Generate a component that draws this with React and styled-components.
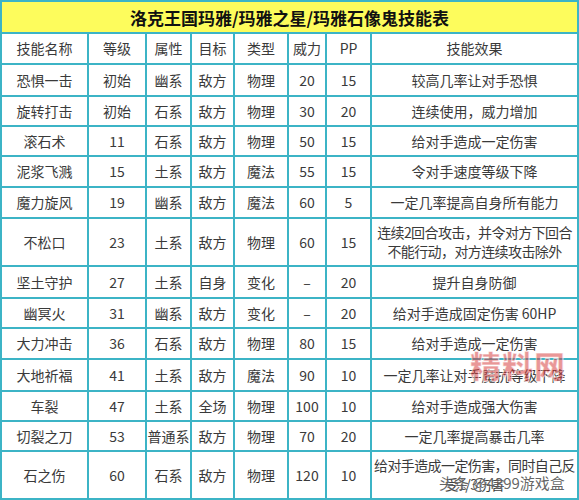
import React from "react";
import styled, { createGlobalStyle } from "styled-components";

const GlobalStyle = createGlobalStyle`
  html, body {
    margin: 0;
    padding: 0;
    background: #ffffff;
  }
  body {
    font-family: "Noto Sans CJK SC", "DejaVu Sans", sans-serif;
  }
`;

const columns = [87, 58, 45, 43, 54, 38, 45, 207];

const header = ["技能名称", "等级", "属性", "目标", "类型", "威力", "PP", "技能效果"];

const skills = [
  { h: 32, cells: ["恐惧一击", "初始", "幽系", "敌方", "物理", "20", "15", "较高几率让对手恐惧"] },
  { h: 30, cells: ["旋转打击", "初始", "石系", "敌方", "物理", "30", "20", "连续使用，威力增加"] },
  { h: 30, cells: ["滚石术", "11", "石系", "敌方", "物理", "50", "15", "给对手造成一定伤害"] },
  { h: 31, cells: ["泥浆飞溅", "15", "土系", "敌方", "魔法", "55", "15", "令对手速度等级下降"] },
  { h: 31, cells: ["魔力旋风", "19", "幽系", "敌方", "魔法", "60", "5", "一定几率提高自身所有能力"] },
  {
    h: 48,
    cells: ["不松口", "23", "土系", "敌方", "物理", "60", "15", ["连续2回合攻击，并令对方下回合", "不能行动，对方连续攻击除外"]],
  },
  { h: 32, cells: ["坚土守护", "27", "土系", "自身", "变化", "–", "20", "提升自身防御"] },
  { h: 30, cells: ["幽冥火", "31", "幽系", "敌方", "变化", "–", "20", "给对手造成固定伤害 60HP"] },
  { h: 31, cells: ["大力冲击", "36", "石系", "敌方", "物理", "80", "15", "给对手造成一定伤害"] },
  { h: 32, cells: ["大地祈福", "41", "土系", "敌方", "魔法", "90", "10", "一定几率让对手魔抗等级下降"] },
  { h: 30, cells: ["车裂", "47", "土系", "全场", "物理", "100", "10", "给对手造成强大伤害"] },
  { h: 30, cells: ["切裂之刀", "53", "普通系", "敌方", "物理", "70", "20", "一定几率提高暴击几率"] },
  {
    h: 48,
    cells: ["石之伤", "60", "石系", "敌方", "物理", "120", "10", ["给对手造成一定伤害，同时自己反", "受1/3伤害"]],
  },
];

export default function App() {
  return (
    <Page>
      <GlobalStyle />
      <Table>
        <colgroup>
          {columns.map((w, i) => (
            <col key={i} style={{ width: w }} />
          ))}
        </colgroup>
        <tbody>
          <Row $h={32}>
            <TitleCell colSpan={8}>洛克王国玛雅/玛雅之星/玛雅石像鬼技能表</TitleCell>
          </Row>
          <Row $h={31}>
            {header.map((t) => (
              <Cell key={t}>{t}</Cell>
            ))}
          </Row>
          {skills.map((s) => (
            <Row key={s.cells[0]} $h={s.h}>
              {s.cells.map((c, i) =>
                Array.isArray(c) ? (
                  <Cell key={i} $tight={c[0].length > 14}>
                    {c[0]}
                    <br />
                    {c[1]}
                  </Cell>
                ) : (
                  <Cell key={i}>{c}</Cell>
                )
              )}
            </Row>
          ))}
        </tbody>
      </Table>
      <RedMark>精料网</RedMark>
      <SourceMark>头条 @4399游戏盒</SourceMark>
    </Page>
  );
}

const Page = styled.div`
  position: relative;
  width: 579px;
  height: 500px;
  overflow: hidden;
  background: #ffffff;
`;

const Table = styled.table`
  table-layout: fixed;
  width: 577px;
  border-collapse: collapse;
  border: 2px solid #3cb4c6;
`;

const Row = styled.tr`
  height: ${(p) => p.$h}px;
`;

const Cell = styled.td`
  border: 2px solid #3cb4c6;
  padding: 0;
  text-align: center;
  vertical-align: middle;
  font-size: 14px;
  line-height: 19px;
  color: #3a3a3a;
  white-space: nowrap;
  overflow: visible;
  letter-spacing: ${(p) => (p.$tight ? "-0.6px" : "0")};
`;

const TitleCell = styled.td`
  border: 2px solid #3cb4c6;
  background: #fdfc5c;
  text-align: center;
  vertical-align: middle;
  font-size: 17px;
  font-weight: 700;
  color: #111111;
  padding: 0;
`;

const RedMark = styled.div`
  position: absolute;
  left: 470px;
  top: 342px;
  font-size: 31px;
  font-weight: 900;
  letter-spacing: 1px;
  color: rgba(214, 60, 60, 0.55);
  -webkit-text-stroke: 1px rgba(255, 255, 255, 0.6);
  pointer-events: none;
`;

const SourceMark = styled.div`
  position: absolute;
  left: 439px;
  top: 472px;
  font-size: 15px;
  color: rgba(60, 60, 60, 0.8);
  text-shadow: 0 0 2px #ffffff;
  pointer-events: none;
`;
